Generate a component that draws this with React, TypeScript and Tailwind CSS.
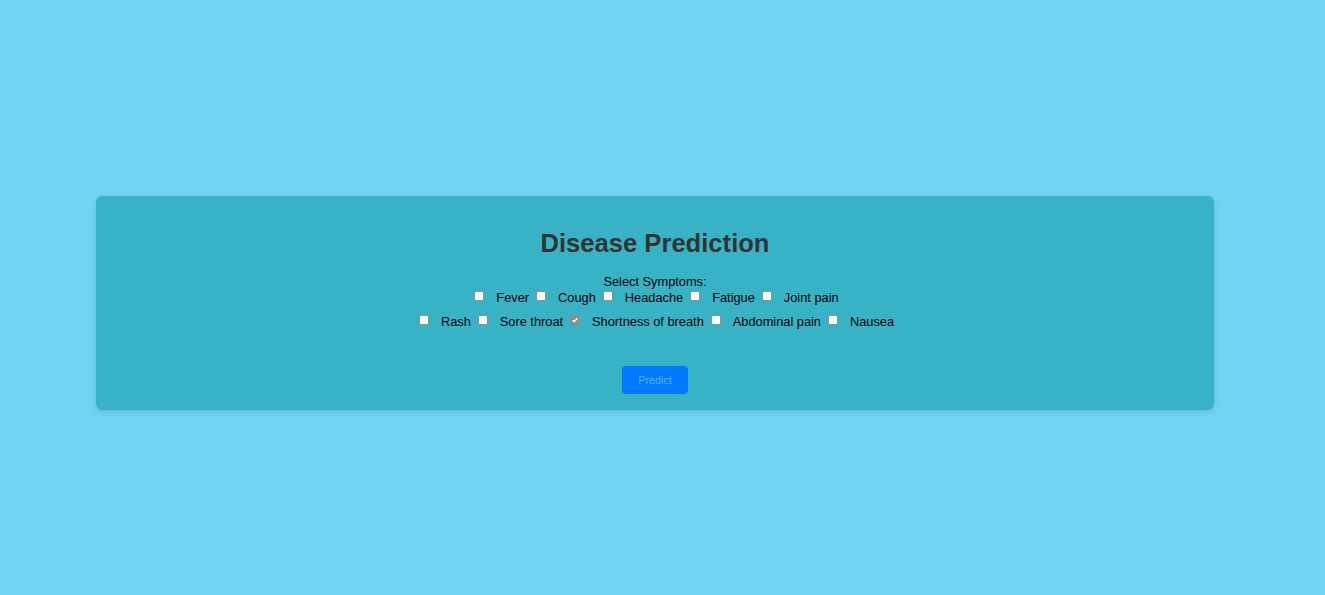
const rowOne = ["Fever", "Cough", "Headache", "Fatigue", "Joint pain"];
const rowTwo = ["Rash", "Sore throat", "Shortness of breath", "Abdominal pain", "Nausea"];

function Box({ checked }: { checked?: boolean }) {
  if (checked) {
    return (
      <span className="mb-[3px] ml-[3px] mr-[2px] flex h-[10px] w-[10px] items-center justify-center rounded-[2px] bg-[#8c8c8c]">
        <svg viewBox="0 0 10 10" className="h-[8px] w-[8px]">
          <path d="M2 5.2 L4 7.2 L8 2.6" fill="none" stroke="#ffffff" strokeWidth="1.6" />
        </svg>
      </span>
    );
  }
  return (
    <span className="mb-[3px] ml-[3px] mr-[2px] block h-[10px] w-[10px] rounded-[2px] border border-[#8f8f8f] bg-white" />
  );
}

function Row({ items, checked }: { items: string[]; checked?: string }) {
  return (
    <div className="flex h-[16px] items-center justify-center">
      {items.map((s, i) => (
        <div key={s} className={"flex items-center " + (i > 0 ? "ml-[4px]" : "")}>
          <Box checked={s === checked} />
          <span className="ml-[10px] leading-[15px]">{s}</span>
        </div>
      ))}
    </div>
  );
}

export default function App() {
  return (
    <div className="h-[595px] w-full overflow-hidden bg-[#72d4f3] pt-[196px] font-['Liberation_Sans',Arial,sans-serif]">
      <div className="ml-[96px] flex w-[1118px] flex-col items-center rounded-[6px] bg-[#38b3c6] px-4 pb-4 pt-[33px] shadow-[0_2px_6px_rgba(0,0,0,0.12)]">
        <h1 className="text-[25.6px] font-bold leading-[29px] text-[#333333]">Disease Prediction</h1>
        <div className="mt-4 flex flex-col items-center text-[12.8px] text-black">
          <div className="h-[15px] leading-[15px]">Select Symptoms:</div>
          <Row items={rowOne} />
          <div className="mt-2">
            <Row items={rowTwo} checked="Shortness of breath" />
          </div>
        </div>
        <button className="mt-[37px] h-[28px] w-[66px] rounded-[4px] bg-[#007bff] text-[10.7px] text-[#5db0fa]">
          Predict
        </button>
      </div>
    </div>
  );
}
